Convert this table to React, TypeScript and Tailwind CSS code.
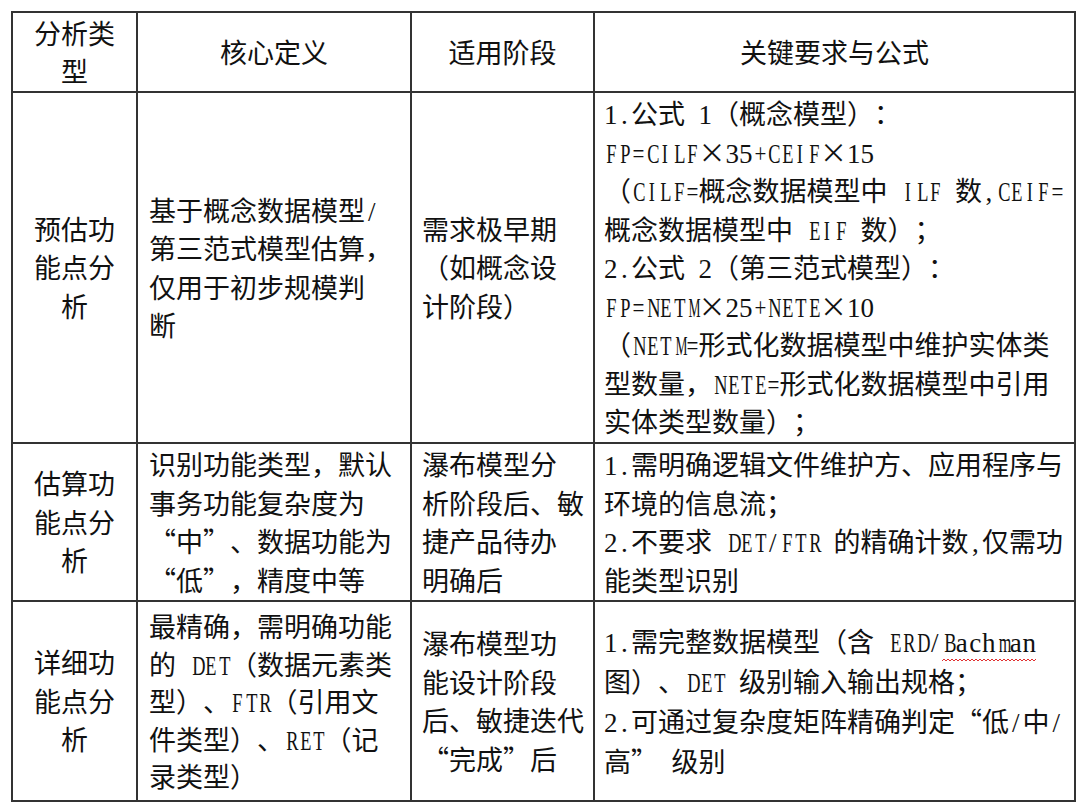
import React from "react";

function scaleFor(c: string): string {
  if (c === "M" || c === "W") return "scale-x-[0.5]";
  if (/[A-Z]/.test(c)) return "scale-x-[0.68]";
  if (c === "m" || c === "w") return "scale-x-[0.6]";
  if (c === "=" || c === "+") return "scale-x-[0.78]";
  return "";
}

function Latin({ text }: { text: string }) {
  return (
    <>
      {text.split("").map((c, j) => (
        <span
          key={j}
          className={
            "inline-block w-[13.5px] text-center leading-none font-['Liberation_Serif',serif] text-[27px] " +
            scaleFor(c)
          }
        >
          {c === " " ? "\u00a0" : c}
        </span>
      ))}
    </>
  );
}

function Rich({ text }: { text: string }) {
  const parts = text.match(/[\x20-\x7E]+|×|[^\x20-\x7E×]+/g) || [];
  return (
    <>
      {parts.map((p, i) => {
        if (p === "×")
          return (
            <span key={i} className="inline-block w-[27px] text-center leading-none">
              ×
            </span>
          );
        if (/^[\x20-\x7E]+$/.test(p)) return <Latin key={i} text={p} />;
        return (
          <span key={i} className="leading-none">
            {p}
          </span>
        );
      })}
    </>
  );
}

type CellProps = { lines: string[]; center?: boolean; pad?: string; lh?: string };

function Cell({ lines, center, pad = "", lh = "h-[38.5px] leading-[38.5px]" }: CellProps) {
  return (
    <div
      className={
        "flex flex-col justify-center border-r-2 border-b-2 border-[#333] overflow-hidden " +
        (center ? "items-center text-center " : "items-start ") +
        pad
      }
    >
      <div className="whitespace-pre">
        {lines.map((l, i) => (
          <div key={i} className={lh}>
            <Rich text={l} />
          </div>
        ))}
      </div>
    </div>
  );
}

export default function App() {
  return (
    <div className="min-h-screen bg-white text-[#111] font-['Noto_Sans_CJK_SC',sans-serif] text-[27px] [text-spacing-trim:space-all]">
      <div className="pt-[11px] pl-[11px]">
        <div className="grid w-fit grid-cols-[125px_274px_183px_481px] grid-rows-[80px_351px_158px_200px] border-l-2 border-t-2 border-[#333]">
          {/* header */}
          <Cell lines={["分析类", "型"]} center />
          <Cell lines={["核心定义"]} center />
          <Cell lines={["适用阶段"]} center />
          <Cell lines={["关键要求与公式"]} center />

          {/* row 1 */}
          <Cell lines={["预估功", "能点分", "析"]} center />
          <Cell
            lines={["基于概念数据模型/", "第三范式模型估算，", "仅用于初步规模判", "断"]}
            pad="pl-[11px]"
          />
          <Cell lines={["需求极早期", "（如概念设", "计阶段）"]} pad="pl-[10px]" />
          <Cell
            lines={[
              "1.公式 1（概念模型）：",
              "FP=CILF×35+CEIF×15",
              "（CILF=概念数据模型中 ILF 数,CEIF=",
              "概念数据模型中 EIF 数）；",
              "2.公式 2（第三范式模型）：",
              "FP=NETM×25+NETE×10",
              "（NETM=形式化数据模型中维护实体类",
              "型数量，NETE=形式化数据模型中引用",
              "实体类型数量）；",
            ]}
            pad="pl-[9px]"
          />

          {/* row 2 */}
          <Cell lines={["估算功", "能点分", "析"]} center />
          <Cell
            lines={["识别功能类型，默认", "事务功能复杂度为", "“中”、数据功能为", "“低”，精度中等"]}
            pad="pl-[11px]"
          />
          <Cell lines={["瀑布模型分", "析阶段后、敏", "捷产品待办", "明确后"]} pad="pl-[10px]" />
          <Cell
            lines={[
              "1.需明确逻辑文件维护方、应用程序与",
              "环境的信息流；",
              "2.不要求 DET/FTR 的精确计数,仅需功",
              "能类型识别",
            ]}
            pad="pl-[9px]"
          />

          {/* row 3 */}
          <Cell lines={["详细功", "能点分", "析"]} center />
          <Cell
            lines={["最精确，需明确功能", "的 DET（数据元素类", "型）、FTR（引用文", "件类型）、RET（记", "录类型）"]}
            pad="pl-[11px]"
            lh="h-[37.5px] leading-[37.5px]"
          />
          <Cell lines={["瀑布模型功", "能设计阶段", "后、敏捷迭代", "“完成”后"]} pad="pl-[10px]" />
          <div className="flex flex-col justify-center items-start border-r-2 border-b-2 border-[#333] pl-[9px]">
            <div className="whitespace-pre">
              <div className="h-[40px] leading-[40px]">
                <Rich text="1.需完整数据模型（含 ERD/" />
                <span className="relative inline-block leading-none">
                  <Latin text="Bachman" />
                  <svg
                    className="absolute left-0 bottom-[-5px]"
                    width="95"
                    height="4"
                    viewBox="0 0 95 4"
                  >
                    <path
                      d="M0 3 L2 1 L4 3 L6 1 L8 3 L10 1 L12 3 L14 1 L16 3 L18 1 L20 3 L22 1 L24 3 L26 1 L28 3 L30 1 L32 3 L34 1 L36 3 L38 1 L40 3 L42 1 L44 3 L46 1 L48 3 L50 1 L52 3 L54 1 L56 3 L58 1 L60 3 L62 1 L64 3 L66 1 L68 3 L70 1 L72 3 L74 1 L76 3 L78 1 L80 3 L82 1 L84 3 L86 1 L88 3 L90 1 L92 3 L94 1"
                      fill="none"
                      stroke="#e03030"
                      strokeWidth="1"
                    />
                  </svg>
                </span>
              </div>
              <div className="h-[40px] leading-[40px]">
                <Rich text="图）、DET 级别输入输出规格；" />
              </div>
              <div className="h-[40px] leading-[40px]">
                <Rich text="2.可通过复杂度矩阵精确判定“低/中/" />
              </div>
              <div className="h-[40px] leading-[40px]">
                <Rich text="高” 级别" />
              </div>
            </div>
          </div>
        </div>
      </div>
    </div>
  );
}
